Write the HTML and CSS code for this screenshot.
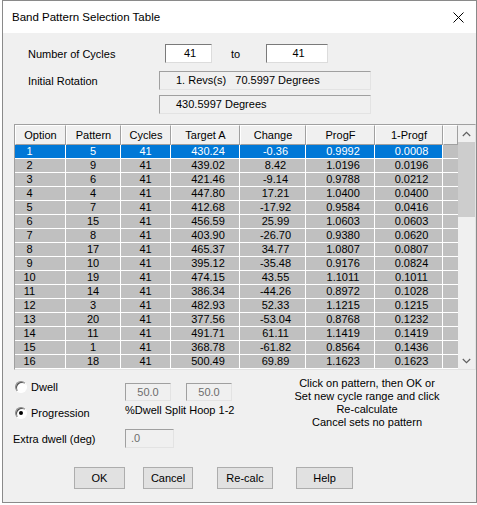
FILE: index.html
```html
<!DOCTYPE html>
<html>
<head>
<meta charset="utf-8">
<title>Band Pattern Selection Table</title>
<link rel="stylesheet" href="styles.css">
</head>
<body>
<div class="window">
  <div class="titlebar">
    <span class="title">Band Pattern Selection Table</span>
    <svg class="close" width="11" height="11" viewBox="0 0 11 11"><path d="M0.5 0.5 L10.5 10.5 M10.5 0.5 L0.5 10.5" stroke="#000" stroke-width="1" fill="none"/></svg>
  </div>
  <div class="content">
    <div class="row row-cycles">
      <span class="label lbl-cycles">Number of Cycles</span>
      <div class="field field-num">41</div>
      <span class="to">to</span>
      <div class="field field-num2">41</div>
    </div>
    <div class="row row-rot">
      <span class="label lbl-rot">Initial Rotation</span>
      <div class="field ro">1. Revs(s)   70.5997 Degrees</div>
    </div>
    <div class="row row-rot2">
      <div class="field ro">430.5997 Degrees</div>
    </div>

    <div class="list">
      <div class="list-main">
        <div class="hdr">
          <div class="h">Option</div><div class="h">Pattern</div><div class="h">Cycles</div><div class="h">Target A</div><div class="h">Change</div><div class="h">ProgF</div><div class="h">1-Progf</div><div class="h"></div>
        </div>
        <div class="rows">
          <div class="r sel"><div class="c opt">1</div><div class="c">5</div><div class="c">41</div><div class="c num">430.24</div><div class="c num">-0.36</div><div class="c num">0.9992</div><div class="c num">0.0008</div><div class="c blank"></div></div>
          <div class="r"><div class="c opt">2</div><div class="c">9</div><div class="c">41</div><div class="c num">439.02</div><div class="c num">8.42</div><div class="c num">1.0196</div><div class="c num">0.0196</div><div class="c blank"></div></div>
          <div class="r"><div class="c opt">3</div><div class="c">6</div><div class="c">41</div><div class="c num">421.46</div><div class="c num">-9.14</div><div class="c num">0.9788</div><div class="c num">0.0212</div><div class="c blank"></div></div>
          <div class="r"><div class="c opt">4</div><div class="c">4</div><div class="c">41</div><div class="c num">447.80</div><div class="c num">17.21</div><div class="c num">1.0400</div><div class="c num">0.0400</div><div class="c blank"></div></div>
          <div class="r"><div class="c opt">5</div><div class="c">7</div><div class="c">41</div><div class="c num">412.68</div><div class="c num">-17.92</div><div class="c num">0.9584</div><div class="c num">0.0416</div><div class="c blank"></div></div>
          <div class="r"><div class="c opt">6</div><div class="c">15</div><div class="c">41</div><div class="c num">456.59</div><div class="c num">25.99</div><div class="c num">1.0603</div><div class="c num">0.0603</div><div class="c blank"></div></div>
          <div class="r"><div class="c opt">7</div><div class="c">8</div><div class="c">41</div><div class="c num">403.90</div><div class="c num">-26.70</div><div class="c num">0.9380</div><div class="c num">0.0620</div><div class="c blank"></div></div>
          <div class="r"><div class="c opt">8</div><div class="c">17</div><div class="c">41</div><div class="c num">465.37</div><div class="c num">34.77</div><div class="c num">1.0807</div><div class="c num">0.0807</div><div class="c blank"></div></div>
          <div class="r"><div class="c opt">9</div><div class="c">10</div><div class="c">41</div><div class="c num">395.12</div><div class="c num">-35.48</div><div class="c num">0.9176</div><div class="c num">0.0824</div><div class="c blank"></div></div>
          <div class="r"><div class="c opt">10</div><div class="c">19</div><div class="c">41</div><div class="c num">474.15</div><div class="c num">43.55</div><div class="c num">1.1011</div><div class="c num">0.1011</div><div class="c blank"></div></div>
          <div class="r"><div class="c opt">11</div><div class="c">14</div><div class="c">41</div><div class="c num">386.34</div><div class="c num">-44.26</div><div class="c num">0.8972</div><div class="c num">0.1028</div><div class="c blank"></div></div>
          <div class="r"><div class="c opt">12</div><div class="c">3</div><div class="c">41</div><div class="c num">482.93</div><div class="c num">52.33</div><div class="c num">1.1215</div><div class="c num">0.1215</div><div class="c blank"></div></div>
          <div class="r"><div class="c opt">13</div><div class="c">20</div><div class="c">41</div><div class="c num">377.56</div><div class="c num">-53.04</div><div class="c num">0.8768</div><div class="c num">0.1232</div><div class="c blank"></div></div>
          <div class="r"><div class="c opt">14</div><div class="c">11</div><div class="c">41</div><div class="c num">491.71</div><div class="c num">61.11</div><div class="c num">1.1419</div><div class="c num">0.1419</div><div class="c blank"></div></div>
          <div class="r"><div class="c opt">15</div><div class="c">1</div><div class="c">41</div><div class="c num">368.78</div><div class="c num">-61.82</div><div class="c num">0.8564</div><div class="c num">0.1436</div><div class="c blank"></div></div>
          <div class="r"><div class="c opt">16</div><div class="c">18</div><div class="c">41</div><div class="c num">500.49</div><div class="c num">69.89</div><div class="c num">1.1623</div><div class="c num">0.1623</div><div class="c blank"></div></div>
        </div>
      </div>
      <div class="vscroll">
        <div class="sb-btn"><svg width="9" height="6" viewBox="0 0 9 6"><polyline points="0.8,5 4.5,1.3 8.2,5" stroke="#606060" stroke-width="1.2" fill="none"/></svg></div>
        <div class="sb-thumb"></div>
        <div class="sb-track"></div>
        <div class="sb-btn"><svg width="9" height="6" viewBox="0 0 9 6"><polyline points="0.8,1 4.5,4.7 8.2,1" stroke="#606060" stroke-width="1.2" fill="none"/></svg></div>
      </div>
    </div>

    <div class="options">
      <div class="col-a">
        <div class="radio-row"><span class="radio"></span><span class="radio-text">Dwell</span></div>
        <div class="radio-row second"><span class="radio on"></span><span class="radio-text">Progression</span></div>
        <div class="extra-label">Extra dwell (deg)</div>
      </div>
      <div class="col-b">
        <div class="dis-row"><div class="dis-box">50.0</div><div class="dis-box">50.0</div></div>
        <div class="caption">%Dwell Split Hoop 1-2</div>
        <div class="dis-box extra">.0</div>
      </div>
      <div class="col-c">
        <div>Click on pattern, then OK or</div>
        <div>Set new cycle range and click</div>
        <div>Re-calculate</div>
        <div>Cancel sets no pattern</div>
      </div>
    </div>

    <div class="buttons">
      <div class="btn btn-ok">OK</div>
      <div class="btn btn-cancel">Cancel</div>
      <div class="btn btn-recalc">Re-calc</div>
      <div class="btn btn-help">Help</div>
    </div>
  </div>
</div>
</body>
</html>
```

FILE: styles.css
```css
* { box-sizing: border-box; }
html, body { margin: 0; padding: 0; background: #ffffff; }
body {
  font-family: "Liberation Sans", Arial, sans-serif;
  font-size: 11px;
  color: #000;
}
.window {
  margin-left: 2px;
  width: 475px;
  height: 503px;
  border: 1px solid #8a8a8a;
  background: #f0f0f0;
  display: flex;
  flex-direction: column;
}
.titlebar {
  height: 32px;
  flex: none;
  background: #fff;
  display: flex;
  align-items: center;
  justify-content: space-between;
  padding-left: 9px;
  padding-right: 12px;
}
.title { font-size: 11.5px; }
.close { display: block; }
.content { flex: 1; }

.row { display: flex; align-items: center; padding-left: 25px; }
.row-cycles { margin-top: 11px; }
.row-rot { margin-top: 8px; }
.row-rot2 { margin-top: 5px; padding-left: 156px; }
.lbl-cycles { width: 137px; }
.lbl-rot { width: 131px; }
.field {
  height: 19px;
  border: 1px solid;
  border-color: #7a7a7a #dcdcdc #dcdcdc #7a7a7a;
  background: #fff;
  line-height: 17px;
}
.field-num { width: 47px; text-align: center; padding-left: 3px; }
.field-num2 { width: 62px; text-align: center; padding-left: 3px; }
.to { width: 54px; padding-left: 19px; }
.field.ro {
  width: 212px;
  background: #f0f0f0;
  border-color: #a0a0a0 #e3e3e3 #e3e3e3 #a0a0a0;
  padding-left: 16px;
  white-space: pre;
}

.list {
  margin: 10px 0 0 11px;
  width: 462px;
  height: 246px;
  border: 1px solid;
  border-color: #a0a0a0 #e3e3e3 #e3e3e3 #a0a0a0;
  display: flex;
  background: #f0f0f0;
}
.list-main { width: 443px; overflow: hidden; display: flex; flex-direction: column; }
.hdr {
  display: grid;
  grid-template-columns: 51px 55px 50px 69px 66px 69px 68px 15px;
  height: 20px;
  flex: none;
}
.h {
  background: #f0f0f0;
  border-top: 1px solid #fff;
  border-left: 1px solid #fff;
  border-right: 1px solid #a0a0a0;
  border-bottom: 1px solid #a0a0a0;
  text-align: center;
  line-height: 18px;
}
.rows { display: flex; flex-direction: column; }
.r {
  display: grid;
  grid-template-columns: 50px 54px 49px 68px 65px 68px 67px 15px;
  column-gap: 1px;
  background: #fff;
  height: 14px;
  padding-bottom: 1px;
  flex: none;
}
.c {
  background: #c0c0c0;
  line-height: 13px;
  text-align: center;
  white-space: nowrap;
}
.c.opt { padding-right: 21px; }
.c.num { padding-left: 6px; }
.r.sel .c { background: #0078d7; color: #fff; }
.r.sel .c.blank { background: #c0c0c0; }

.vscroll { width: 17px; display: flex; flex-direction: column; background: #f0f0f0; }
.sb-btn { height: 17px; flex: none; display: flex; align-items: center; justify-content: center; }
.sb-btn svg { display: block; }
.sb-thumb { height: 75px; flex: none; background: #cdcdcd; }
.sb-track { flex: 1; }

.options { display: flex; }
.col-a { width: 122px; padding-left: 10px; }
.radio-row { display: flex; align-items: center; height: 13px; margin-top: 10px; }
.radio-row.second { margin-top: 13px; }
.radio {
  width: 12px;
  height: 12px;
  margin-left: 2px;
  margin-right: 4px;
  border-radius: 50%;
  border: 1px solid;
  border-color: #8a8a8a #fff #fff #8a8a8a;
  box-shadow: inset 1px 1px 0 #505050;
  background: #fff;
  display: flex;
  align-items: center;
  justify-content: center;
}
.radio.on::after {
  content: "";
  width: 4px;
  height: 4px;
  border-radius: 50%;
  background: #000;
}
.extra-label { margin-top: 14px; line-height: 13px; }
.col-b { width: 137px; }
.dis-row { display: flex; gap: 15px; margin-top: 13px; }
.dis-box {
  width: 46px;
  height: 18px;
  border: 1px solid;
  border-color: #a0a0a0 #e3e3e3 #e3e3e3 #a0a0a0;
  background: #f0f0f0;
  color: #6d6d6d;
  text-align: center;
  line-height: 16px;
}
.dis-box.extra {
  width: 49px;
  height: 19px;
  margin-top: 12px;
  text-align: left;
  padding-left: 5px;
  line-height: 17px;
}
.caption { margin-top: 3px; line-height: 13px; }
.col-c { width: 210px; margin-top: 7px; text-align: center; line-height: 13px; }

.buttons { display: flex; margin-top: 19px; padding-left: 71px; }
.btn {
  height: 22px;
  border: 1px solid #adadad;
  background: #e1e1e1;
  text-align: center;
  line-height: 20px;
}
.btn-ok { width: 51px; }
.btn-cancel { width: 50px; margin-left: 18px; }
.btn-recalc { width: 56px; margin-left: 24px; }
.btn-help { width: 57px; margin-left: 23px; }
```
